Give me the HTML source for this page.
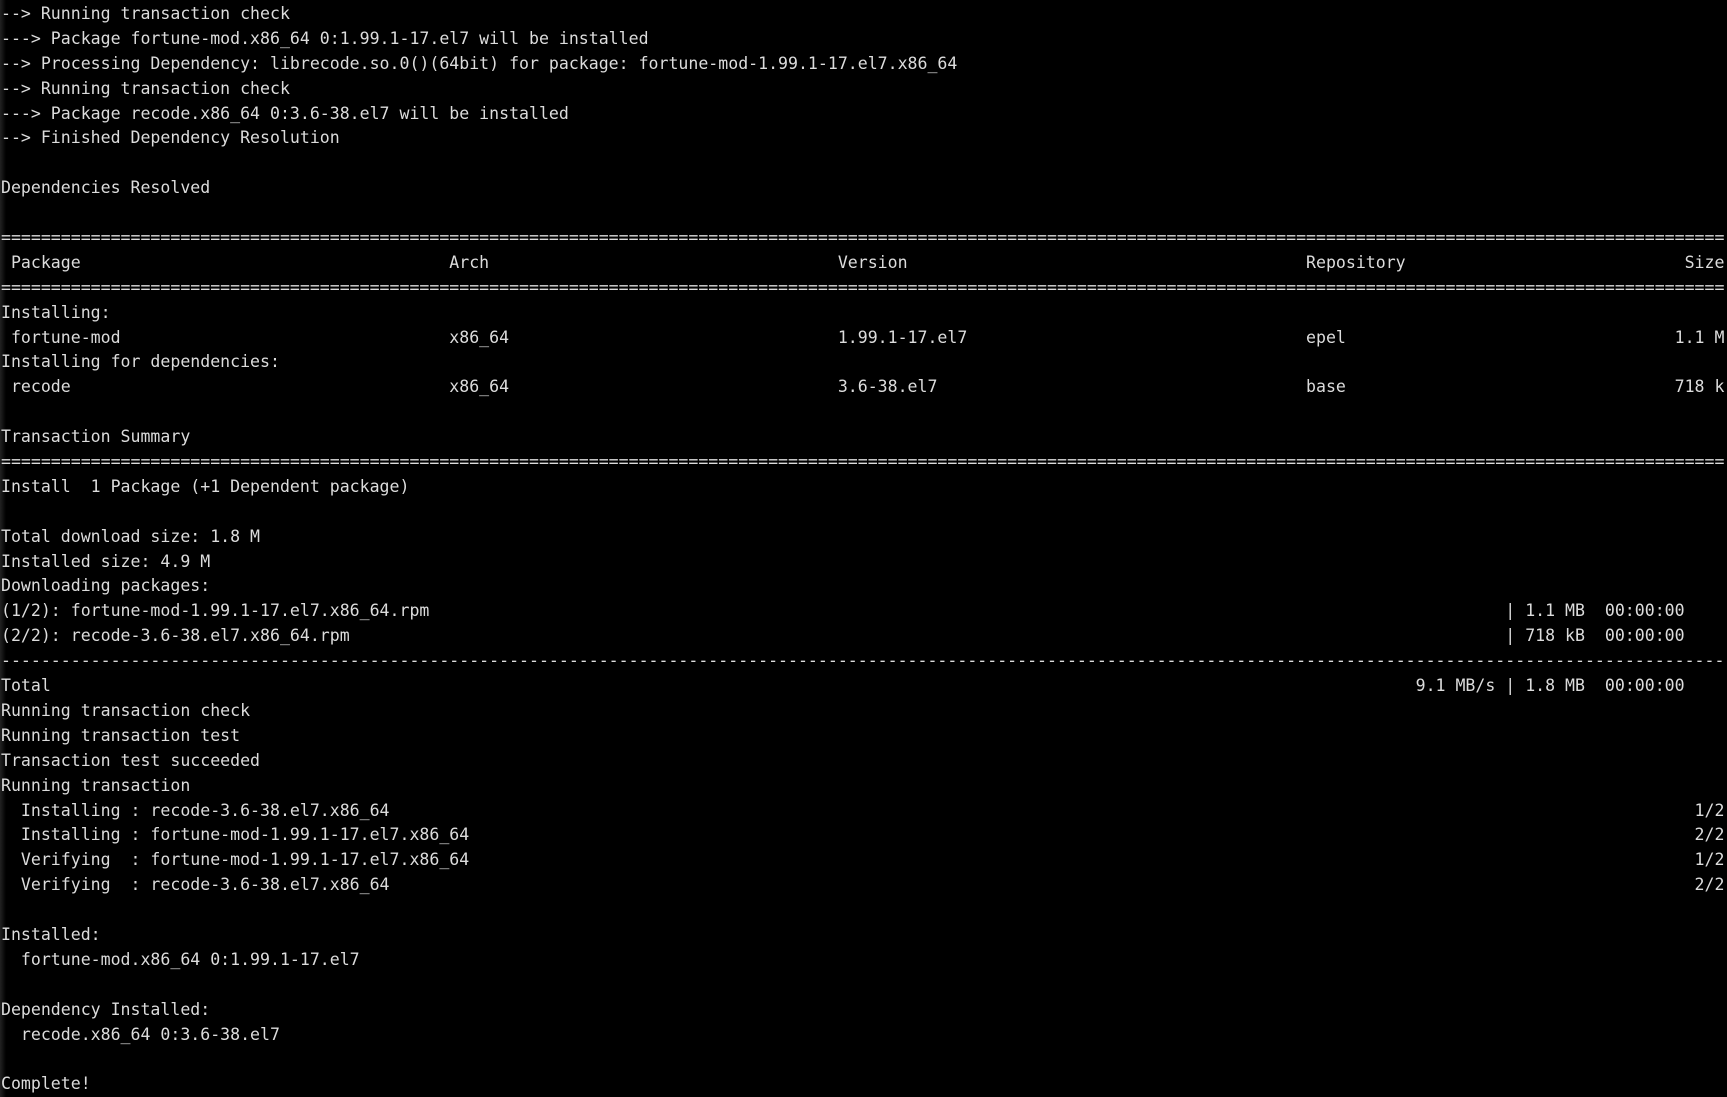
<!DOCTYPE html>
<html><head><meta charset="utf-8"><style>
html,body{margin:0;padding:0;background:#000;}
body{width:1727px;height:1097px;overflow:hidden;position:relative;}
#t{position:absolute;left:1px;top:2px;font-family:"DejaVu Sans Mono","Liberation Mono",monospace;font-size:16.56px;color:#dcdcdc;}
.l{position:relative;height:24.9px;line-height:24.9px;white-space:pre;}
.l span{position:absolute;top:0;}
.sh{position:absolute;left:0;top:0;width:6px;height:1097px;background:linear-gradient(to right,#222,#000);}
</style></head><body>
<div class="sh"></div>
<div id="t">
<div class="l">--&gt; Running transaction check</div>
<div class="l">---&gt; Package fortune-mod.x86_64 0:1.99.1-17.el7 will be installed</div>
<div class="l">--&gt; Processing Dependency: librecode.so.0()(64bit) for package: fortune-mod-1.99.1-17.el7.x86_64</div>
<div class="l">--&gt; Running transaction check</div>
<div class="l">---&gt; Package recode.x86_64 0:3.6-38.el7 will be installed</div>
<div class="l">--&gt; Finished Dependency Resolution</div>
<div class="l"> </div>
<div class="l">Dependencies Resolved</div>
<div class="l"> </div>
<div class="l" id="eq1"></div>
<div class="l"><span style="left:1ch">Package</span><span style="left:45ch">Arch</span><span style="left:84ch">Version</span><span style="left:131ch">Repository</span><span style="left:169ch">Size</span></div>
<div class="l eq"></div>
<div class="l">Installing:</div>
<div class="l"><span style="left:1ch">fortune-mod</span><span style="left:45ch">x86_64</span><span style="left:84ch">1.99.1-17.el7</span><span style="left:131ch">epel</span><span style="left:168ch">1.1 M</span></div>
<div class="l">Installing for dependencies:</div>
<div class="l"><span style="left:1ch">recode</span><span style="left:45ch">x86_64</span><span style="left:84ch">3.6-38.el7</span><span style="left:131ch">base</span><span style="left:168ch">718 k</span></div>
<div class="l"> </div>
<div class="l">Transaction Summary</div>
<div class="l eq"></div>
<div class="l">Install  1 Package (+1 Dependent package)</div>
<div class="l"> </div>
<div class="l">Total download size: 1.8 M</div>
<div class="l">Installed size: 4.9 M</div>
<div class="l">Downloading packages:</div>
<div class="l">(1/2): fortune-mod-1.99.1-17.el7.x86_64.rpm<span style="left:151ch">| 1.1 MB  00:00:00</span></div>
<div class="l">(2/2): recode-3.6-38.el7.x86_64.rpm<span style="left:151ch">| 718 kB  00:00:00</span></div>
<div class="l" id="dash"></div>
<div class="l">Total<span style="left:142ch">9.1 MB/s | 1.8 MB  00:00:00</span></div>
<div class="l">Running transaction check</div>
<div class="l">Running transaction test</div>
<div class="l">Transaction test succeeded</div>
<div class="l">Running transaction</div>
<div class="l">  Installing : recode-3.6-38.el7.x86_64<span style="left:170ch">1/2</span></div>
<div class="l">  Installing : fortune-mod-1.99.1-17.el7.x86_64<span style="left:170ch">2/2</span></div>
<div class="l">  Verifying  : fortune-mod-1.99.1-17.el7.x86_64<span style="left:170ch">1/2</span></div>
<div class="l">  Verifying  : recode-3.6-38.el7.x86_64<span style="left:170ch">2/2</span></div>
<div class="l"> </div>
<div class="l">Installed:</div>
<div class="l">  fortune-mod.x86_64 0:1.99.1-17.el7</div>
<div class="l"> </div>
<div class="l">Dependency Installed:</div>
<div class="l">  recode.x86_64 0:3.6-38.el7</div>
<div class="l"> </div>
<div class="l">Complete!</div>
</div>
<script>
var e="=".repeat(173),d="-".repeat(173);
document.getElementById("eq1").textContent=e;
document.querySelectorAll(".eq").forEach(function(x){x.textContent=e;});
document.getElementById("dash").textContent=d;
</script>
</body></html>
